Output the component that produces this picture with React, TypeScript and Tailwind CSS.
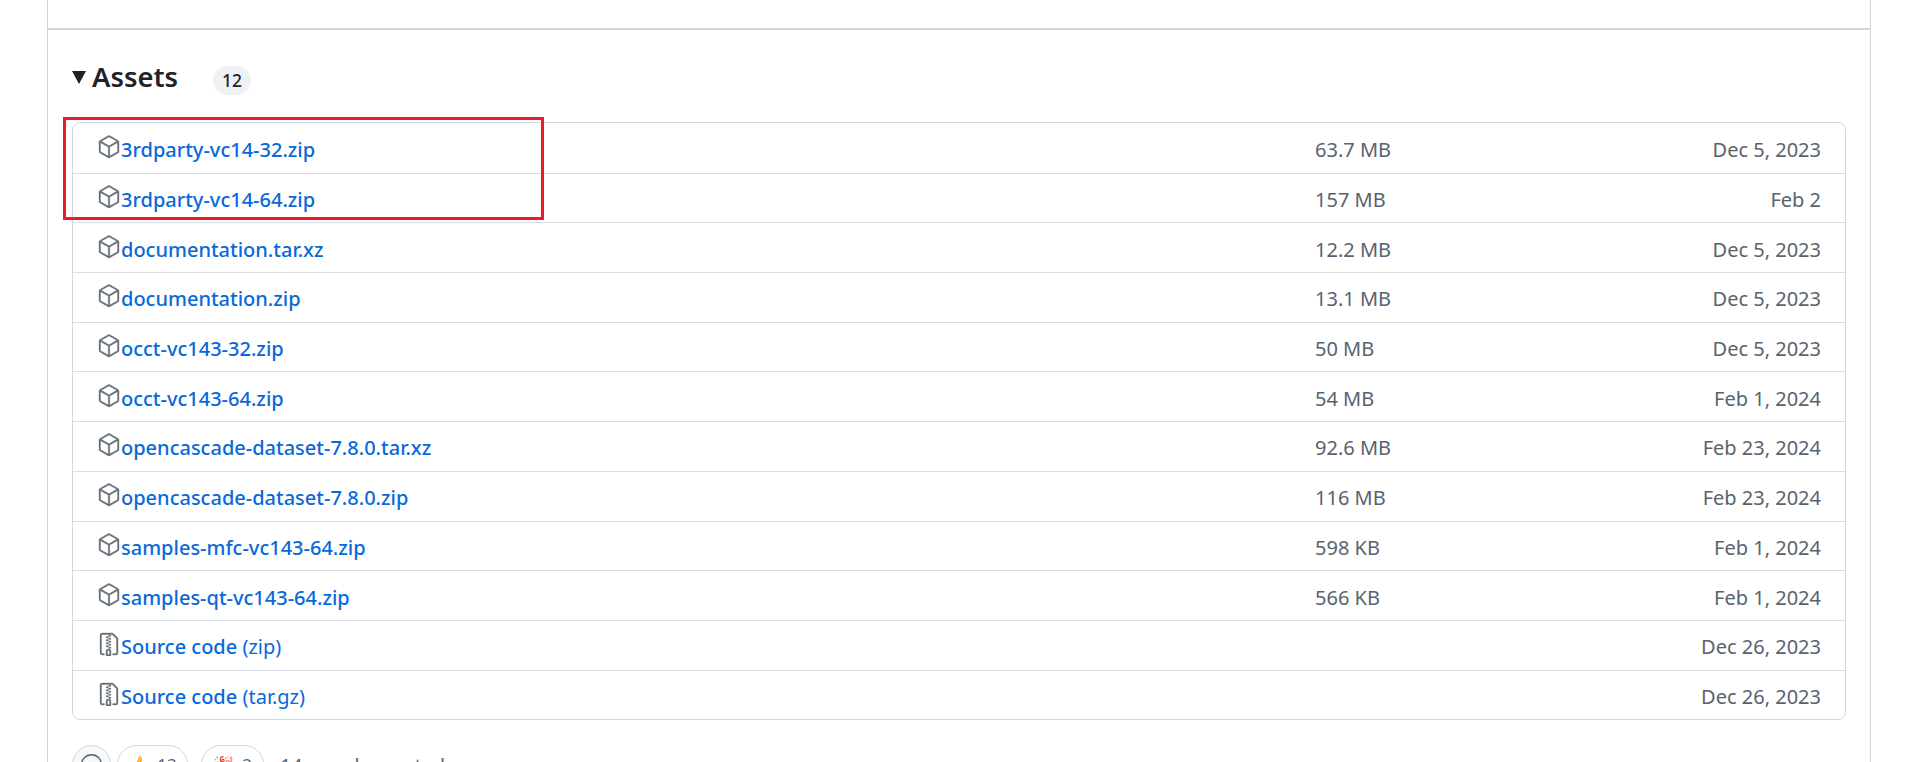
import { GoFileZip, GoPackage, GoSmiley } from 'react-icons/go';

const assets = [
  { name: '3rdparty-vc14-32.zip', size: '63.7 MB', date: 'Dec 5, 2023' },
  { name: '3rdparty-vc14-64.zip', size: '157 MB', date: 'Feb 2' },
  { name: 'documentation.tar.xz', size: '12.2 MB', date: 'Dec 5, 2023' },
  { name: 'documentation.zip', size: '13.1 MB', date: 'Dec 5, 2023' },
  { name: 'occt-vc143-32.zip', size: '50 MB', date: 'Dec 5, 2023' },
  { name: 'occt-vc143-64.zip', size: '54 MB', date: 'Feb 1, 2024' },
  { name: 'opencascade-dataset-7.8.0.tar.xz', size: '92.6 MB', date: 'Feb 23, 2024' },
  { name: 'opencascade-dataset-7.8.0.zip', size: '116 MB', date: 'Feb 23, 2024' },
  { name: 'samples-mfc-vc143-64.zip', size: '598 KB', date: 'Feb 1, 2024' },
  { name: 'samples-qt-vc143-64.zip', size: '566 KB', date: 'Feb 1, 2024' },
];

const sources = [
  { name: 'Source code', ext: '(zip)', date: 'Dec 26, 2023' },
  { name: 'Source code', ext: '(tar.gz)', date: 'Dec 26, 2023' },
];

function Row({
  icon,
  name,
  ext,
  size,
  date,
}: {
  icon: React.ReactNode;
  name: string;
  ext?: string;
  size?: string;
  date: string;
}) {
  return (
    <div className="flex h-[49.7px] items-center border-t border-[#d8dee4] pl-[25px] pr-[24px] pt-[4px] first:border-t-0">
      <div className="flex min-w-0 flex-1 items-center">
        <span className="-mt-[6px] -ml-[1px] shrink-0 text-[#656d76]">{icon}</span>
        <a className="whitespace-nowrap text-[20px] font-medium text-[#0969da]">
          {name}
          {ext ? <span className="font-normal"> {ext}</span> : null}
        </a>
      </div>
      <span className="w-[286px] shrink-0 text-[20px] text-[#59636e]">{size}</span>
      <span className="w-[220px] shrink-0 text-right text-[20px] text-[#59636e]">{date}</span>
    </div>
  );
}

export default function App() {
  return (
    <div className="relative h-[762px] overflow-hidden bg-white font-['Noto_Sans','Liberation_Sans',sans-serif]">
      <div className="ml-[47px] h-[762px] w-[1824px] border-x border-[#d0d7de]">
        <div className="h-[30px] border-b-2 border-[#d0d7de]" />
        <div className="pl-[24px] pr-[24px]">
          <div className="flex h-[92px] items-start pt-[28px]">
            <span className="mt-[13px] h-0 w-0 border-x-[7px] border-t-[13px] border-x-transparent border-t-[#1f2328]" />
            <h3 className="ml-[6px] text-[27.4px] font-semibold leading-[38px] text-[#1f2328]">Assets</h3>
            <span className="ml-[35px] mt-[8px] flex h-[29px] w-[38px] items-center justify-center rounded-full bg-[#eff2f5] text-[17.5px] font-medium text-[#1f2328]">
              12
            </span>
          </div>
          <div className="rounded-[8px] border border-[#d0d7de]">
            {assets.map((asset) => (
              <Row
                key={asset.name}
                icon={<GoPackage size={24} stroke="currentColor" strokeWidth={0.35} />}
                name={asset.name}
                size={asset.size}
                date={asset.date}
              />
            ))}
            {sources.map((source) => (
              <Row
                key={source.ext}
                icon={<GoFileZip size={24} stroke="currentColor" strokeWidth={0.35} />}
                name={source.name}
                ext={source.ext}
                date={source.date}
              />
            ))}
          </div>
          <div className="mt-[25px] flex items-start">
            <span className="flex h-[39px] w-[39px] items-center justify-center rounded-full border border-[#d0d7de] bg-[#f6f8fa] text-[#59636e]">
              <GoSmiley size={23} />
            </span>
            <span className="ml-[6px] flex h-[39px] w-[71px] items-center justify-center gap-2 rounded-full border border-[#d0d7de] text-[17px] text-[#59636e]">
              <span>👍</span>
              <span>13</span>
            </span>
            <span className="ml-[13px] flex h-[39px] w-[63px] items-center justify-center gap-2 rounded-full border border-[#d0d7de] text-[17px] text-[#59636e]">
              <span>🎉</span>
              <span>2</span>
            </span>
            <span className="ml-[16px] mt-[6px] text-[19.6px] text-[#59636e]">14 people reacted</span>
          </div>
        </div>
      </div>
      <div className="pointer-events-none absolute left-[63px] top-[117px] h-[103px] w-[481px] border-[3px] border-[#ed1c24]" />
    </div>
  );
}
